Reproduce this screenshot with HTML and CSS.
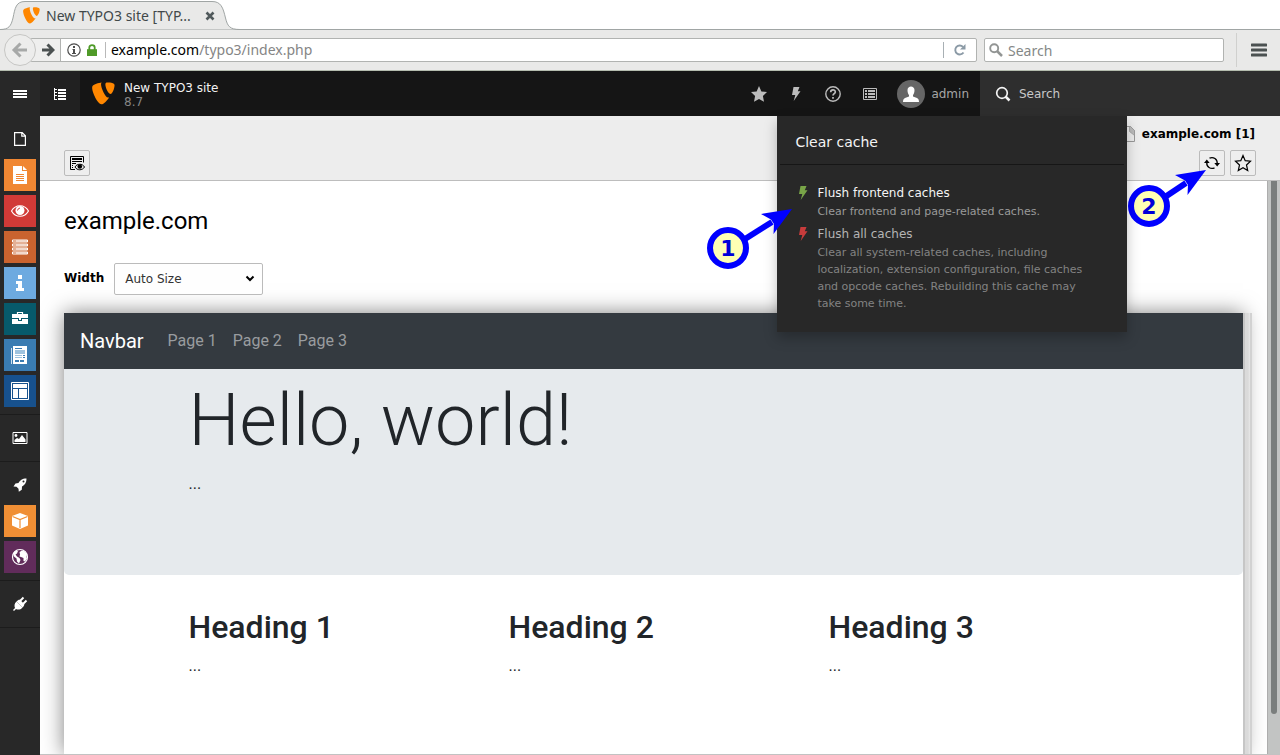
FILE: index.html
```html
<!DOCTYPE html>
<html lang="en">
<head>
<meta charset="utf-8">
<title>New TYPO3 site [TYPO3 CMS 8.7]</title>
<link rel="stylesheet" href="styles.css">
</head>
<body>
<svg class="sprite" aria-hidden="true">
  <symbol id="typo3" viewBox="0 0 16 16"><path fill="#ff8700" d="M11.900 10.700c-.2.1-.4.1-.7.1-2 0-4.900-6.800-4.900-9.100 0-.8.2-1.100.5-1.400C4.300.6 1.400 1.500.500 2.600.3 2.900.1 3.300.1 3.900.1 7.400 3.900 15.500 6.600 15.500c1.200 0 3.400-2 5.300-4.800M10.700.3c2.500 0 5 .4 5 1.800 0 2.800-1.800 6.300-2.700 6.300-1.600 0-3.700-4.500-3.700-6.700C9.300.7 9.700.3 10.700.3"/></symbol>
  <symbol id="bolt" viewBox="0 0 16 16"><path fill="currentColor" d="M5.500 1h6L9.800 5.200h2.700L5.700 15l1.600-6H4z"/></symbol>
</svg>

<div class="browser-tabs">
  <svg class="tab-shape" viewBox="0 0 240 30" aria-hidden="true"><path d="M0 29.500C9 29.500 11 26 13 18 15 8 16 1.500 25 1.500H212c9 0 11 6 13.500 16.500 2 8 4 11.500 14.500 11.500" fill="#e9e9e8" stroke="#a0a5a4"/></svg>
  <div class="tab">
    <svg class="tab-logo"><use href="#typo3"/></svg>
    <span class="tab-title">New TYPO3 site [TYP...</span>
    <button class="tab-close" aria-label="Close tab"><svg width="10" height="10" viewBox="0 0 10 10"><path d="M1.500 1.500l7 7M8.500 1.500l-7 7" stroke="#50595b" stroke-width="2.600"/></svg></button>
  </div>
</div>

<div class="browser-bar">
  <button class="back" aria-label="Back"><svg width="18" height="18" viewBox="0 0 18 18" fill="none" stroke="#a7a9a8" stroke-width="3"><path d="M9.500 2.500L3 9l6.500 6.500M3.500 9H16"/></svg></button>
  <div class="address">
    <button class="forward" aria-label="Forward"><svg width="14" height="14" viewBox="0 0 14 14" fill="none" stroke="#4b5151" stroke-width="3"><path d="M6.500 1.500L12 7l-5.500 5.500M11.500 7H1"/></svg></button>
    <svg class="info" width="14" height="14" viewBox="0 0 14 14"><circle cx="7" cy="7" r="6.200" fill="none" stroke="#4d4d4d" stroke-width="1.200"/><path d="M6 3h2v2H6zM5.500 6H8v4h1v1H5v-1h1V7h-.5z" fill="#4d4d4d"/></svg>
    <svg class="lock" width="10" height="12" viewBox="0 0 10 12"><path d="M2.300 6V3.500C2.300.3 7.700.3 7.700 3.500V6" fill="none" stroke="#4f9a28" stroke-width="1.800"/><path d="M0 5.200h10V12H0z" fill="#4f9a28"/></svg>
    <div class="url" role="textbox" aria-label="Address" contenteditable="true" spellcheck="false">example.com<span class="url-path">/typo3/index.php</span></div>
    <button class="reload" aria-label="Reload"><svg width="14" height="14" viewBox="0 0 14 14"><path d="M10.500 9.500A4.500 4.500 0 1 1 10 3.800" fill="none" stroke="#8b9aa6" stroke-width="1.900"/><path d="M12.500 1v5.500H7z" fill="#8b9aa6"/></svg></button>
  </div>
  <label class="browser-search">
    <svg width="14" height="14" viewBox="0 0 14 14" fill="none" stroke="#929594"><circle cx="5.200" cy="5.200" r="4" stroke-width="1.900"/><path d="M8 8l5 5" stroke-width="2.500"/></svg>
    <input type="search" placeholder="Search" aria-label="Search the web">
  </label>
  <button class="browser-menu" aria-label="Open menu"><svg width="16" height="14" viewBox="0 0 16 14"><path d="M1 2h14M1 7h14M1 12h14" stroke="#4b5151" stroke-width="3" stroke-linecap="round"/></svg></button>
</div>

<div class="backend">
  <nav class="modules" aria-label="Modules">
    <button class="modules-toggle" aria-label="Toggle module menu"><svg width="14" height="10" viewBox="0 0 14 10" fill="#fff"><path d="M0 1h14v2H0zM0 4h14v2H0zM0 7h14v2H0z"/></svg></button>
    <div class="module-group">
      <a class="module" href="#page" aria-label="Web"><svg viewBox="0 0 16 16"><path d="M2.600 1.600h7.600l3.200 3.200v9.600H2.600zM9.800 1.600v3.600h3.600" fill="none" stroke="#fff" stroke-width="1.200"/></svg></a>
      <a class="module orange" href="#page" aria-label="Page"><svg viewBox="0 0 18 18"><path d="M2 0h9v5h5v13H2zM12 0l4 4h-4z" fill="#fff"/><path d="M5 8.500h8M5 10.500h8M5 12.500h8M5 14.500h8" stroke="#f08733"/></svg></a>
      <a class="module red" href="#view" aria-label="View"><svg viewBox="0 0 18 18"><path d="M.5 9C4.500 2 13.500 2 17.500 9 13.500 16 4.500 16 .5 9z" fill="none" stroke="#fff" stroke-width="1.200"/><circle cx="9" cy="8.500" r="4.500" fill="#fff"/><path d="M6.500 8.500A3 3 0 0 1 9 6" stroke="#d13a37" fill="none"/></svg></a>
      <a class="module rust" href="#list" aria-label="List"><svg viewBox="0 0 18 18"><path d="M1.500 2h15v2h-15zM1.500 6h15v2h-15zM1.500 10h15v2h-15zM1.500 14h15v2h-15z" fill="#c9632f" stroke="#fff"/><path d="M5 3h11M5 7h11M5 11h11M5 15h11" stroke="#fff"/></svg></a>
      <a class="module sky" href="#info" aria-label="Info"><svg viewBox="0 0 18 18" fill="#fff"><path d="M7 1h4v4H7zM5 7h6v7h2v3H5v-3h2v-4H5z"/></svg></a>
      <a class="module teal" href="#functions" aria-label="Functions"><svg viewBox="0 0 18 18"><path d="M6.500 4.500v-2h5v2" fill="none" stroke="#fff" stroke-width="1.200"/><path d="M1 4h16v4h-7v2H8V8H1zM1 9h6v2h4V9h6v5H1z" fill="#fff"/></svg></a>
      <a class="module blue" href="#forms" aria-label="Forms"><svg viewBox="0 0 18 18"><path d="M2 0h14v18H2z" fill="#fff"/><path d="M0 2h1v16H0z" fill="#cfe0ee"/><path d="M4 4h10v4H4zM4 9h7v1H4zM4 11h7v1H4z" fill="#9fc3de"/><path d="M4 2h7v1H4zM12 9h2v1h-2zM12 11h2v1h-2zM4 14h4v2H4zM9 14h4v2H9z" fill="#3a7cb2"/></svg></a>
      <a class="module navy" href="#template" aria-label="Template"><svg viewBox="0 0 18 18"><path d="M.5.500h17v17H.5z" fill="none" stroke="#fff"/><path d="M2 2h14v4H2zM2 7h5v9H2zM8 7h8v9H8z" fill="#fff"/></svg></a>
    </div>
    <div class="module-group">
      <a class="module" href="#file" aria-label="File"><svg viewBox="0 0 16 16"><path d="M1 2.500h14v11H1z" fill="none" stroke="#fff"/><circle cx="4" cy="5.500" r="1.400" fill="#fff"/><path d="M2.500 12V10l2.500-2 2 1 3-4 3.500 4.500V12z" fill="#fff"/></svg></a>
    </div>
    <div class="module-group">
      <a class="module" href="#admin" aria-label="Admin tools"><svg viewBox="0 0 16 16" fill="#fff"><path d="M14.500 1.500C10 1.500 8 3.500 6.500 6L3.500 6.500 1.500 9.500l3 .3 2 2 .3 3 3-2L10 9.500c2.500-1.500 4.500-3.500 4.500-8zM11.500 3.500a1 1 0 1 1 0 2 1 1 0 0 1 0-2z"/></svg></a>
      <a class="module amber" href="#extensions" aria-label="Extensions"><svg viewBox="0 0 18 18"><path d="M9 1l8 3v9.500L9 17l-8-3.500V4z" fill="#fff"/><path d="M1.500 4.500L9 7.500l7.500-3M9 7.500V16" fill="none" stroke="#f08f35" stroke-width="1.200"/></svg></a>
      <a class="module purple" href="#language" aria-label="Languages"><svg viewBox="0 0 18 18"><circle cx="9" cy="9" r="7.500" fill="none" stroke="#fff" stroke-width="1.200"/><path d="M2 5l3-2.500 2 .5-1 2.500-1.500 1 1.500 2 2.500 1.500 1 2-1.500 3.500-2-2-.5-3-2.500-2zM8.500 4L11 2.500l3 1 2 3-.5 2.500.5 1.500-2 3-1.500-.5v-3L10 9 8.500 8.500 9 6.500z" fill="#fff"/></svg></a>
    </div>
    <div class="module-group">
      <a class="module" href="#system" aria-label="System"><svg viewBox="0 0 16 16"><path d="M4.500 5.500l6 6c-2 2.500-5 2.500-6.500 1.500l-2 2-1-1 2-2c-.8-2-.8-4.500 1.500-6.500z" fill="#fff"/><path d="M4.500 5.500C6 3.800 7 3.500 8 3.800l4.200 4.200c.3 1-.2 2-1.700 3.500z" fill="#fff"/><path d="M8 5l3.500-3.500M11 8l3.500-3.500" stroke="#fff" stroke-width="1.900"/></svg></a>
    </div>
  </nav>

  <div class="workspace">
    <header class="topbar">
      <button class="tree-toggle" aria-label="Toggle page tree"><svg width="12" height="12" viewBox="0 0 12 12" fill="#fff"><path d="M0 0h1v12H0zM1 1h2v1H1zM1 4h2v1H1zM1 7h2v1H1zM1 11h2v1H1zM4 1h8v2H4zM4 4h8v2H4zM4 7h8v2H4zM4 10h8v2H4z"/></svg></button>
      <a class="brand" href="#home">
        <svg class="brand-logo"><use href="#typo3"/></svg>
        <span class="brand-text">New TYPO3 site<span class="version">8.7</span></span>
      </a>
      <div class="tools">
        <button class="tool" aria-label="Bookmarks"><svg width="18" height="18" viewBox="0 0 18 18"><path d="M9 1l2.400 5.400 5.600.6-4.100 4 1.100 5.800L9 14l-5 2.800L5.100 11 1 7l5.600-.6z" fill="#bcbcbc"/></svg></button>
        <div class="cache">
          <button class="tool" aria-label="Clear cache" aria-expanded="true"><svg class="tool-bolt"><use href="#bolt"/></svg></button>
          <section class="cache-menu">
            <h2 class="cache-title">Clear cache</h2>
            <a class="cache-item active" href="#frontend"><svg class="flush green"><use href="#bolt"/></svg><span><span class="cache-name">Flush frontend caches</span><span class="cache-text">Clear frontend and page-related caches.</span></span></a>
            <a class="cache-item" href="#all"><svg class="flush crimson"><use href="#bolt"/></svg><span><span class="cache-name">Flush all caches</span><span class="cache-text">Clear all system-related caches, including localization, extension configuration, file caches and opcode caches. Rebuilding this cache may take some time.</span></span></a>
            <svg class="callout callout-one" width="86" height="64" viewBox="0 0 86 64"><path d="M38 32L65 15" stroke="#00f" stroke-width="6"/><path d="M85 2L54 7l10 5.500 3 4.500-.5 10z" fill="#00f"/><circle cx="21" cy="41" r="18" fill="#ffffb4" stroke="#00f" stroke-width="6"/><text class="callout-number" x="21" y="49">1</text></svg>
          </section>
        </div>
        <button class="tool" aria-label="Help"><svg width="16" height="16" viewBox="0 0 16 16" fill="none" stroke="#bcbcbc"><circle cx="8" cy="8" r="7.200" stroke-width="1.400"/><path d="M5.700 6.200c0-3 4.600-3 4.600-.3C10.300 7.600 8 7.700 8 9.500M8 11v1.800" stroke-width="1.700"/></svg></button>
        <button class="tool" aria-label="System information"><svg width="14" height="12" viewBox="0 0 14 12"><path d="M.5.500h13v11H.5z" fill="none" stroke="#bcbcbc"/><path d="M2 3h2M2 6h2M2 9h2M5 3h7M5 6h7M5 9h7" stroke="#bcbcbc" stroke-width="1.800"/></svg></button>
        <button class="user"><span class="avatar"><svg width="16" height="18" viewBox="0 0 16 18" fill="#fff"><path d="M4.500 5C4.500.300 11.500.300 11.500 5c0 2.500-.7 4-1.500 5v1.500l4 1.500c1.500.7 2 2 2 4H0c0-2 .5-3.300 2-4l4-1.500V10C5.200 9 4.500 7.500 4.500 5z"/></svg></span>admin</button>
      </div>
      <label class="backend-search"><svg width="16" height="16" viewBox="0 0 16 16" fill="none" stroke="#f4f4f4"><circle cx="7" cy="7" r="5.300" stroke-width="1.700"/><path d="M10.500 10.500l4 4" stroke-width="2.500"/></svg><input type="search" placeholder="Search" aria-label="Search records"></label>
    </header>

    <div class="docheader">
      <div class="page-path"><svg width="13" height="16" viewBox="0 0 13 16"><path d="M.5.500h8l4 4v11H.5z" fill="#ededed" stroke="#999"/><path d="M7.500 0v5.500l5 4v-5L8.500.500z" fill="#bbb" stroke="#999" stroke-width=".7"/></svg><b>example.com [1]</b></div>
      <div class="doc-actions">
        <button class="doc-button" aria-label="View webpage"><svg width="16" height="16" viewBox="0 0 16 16"><path d="M6 14.500H1.500V1.500h13v6" fill="none" stroke="#000"/><path d="M3 4h10" stroke="#000" stroke-width="2"/><path d="M3 6.500h10M3 8.500h4M3 10.500h1M3 12.500h1" stroke="#000"/><path d="M6 12c2-3.700 7.500-3.700 9.500 0-2 3.700-7.500 3.700-9.500 0z" fill="#ededed" stroke="#000"/><circle cx="10.800" cy="11.500" r="2.300"/></svg></button>
        <div class="doc-actions-right">
          <div class="refresh">
            <button class="doc-button" aria-label="Reload"><svg width="16" height="16" viewBox="0 0 16 16"><path d="M5.500 3.200A5.300 5.300 0 0 1 13.200 8.500M10.500 12.800A5.300 5.300 0 0 1 2.800 7.500" fill="none" stroke="#000" stroke-width="1.300"/><path d="M10.300 8H16l-2.800 3.500zM0 8l2.800-3.500L5.700 8z"/></svg></button>
            <svg class="callout callout-two" width="80" height="60" viewBox="0 0 80 60"><path d="M37 29L58 15" stroke="#00f" stroke-width="6"/><path d="M78 2L47 7l10 5.500 3 4.500-.5 10z" fill="#00f"/><circle cx="21" cy="38" r="18" fill="#ffffb4" stroke="#00f" stroke-width="6"/><text class="callout-number" x="21" y="46">2</text></svg>
          </div>
          <button class="doc-button" aria-label="Bookmark this page"><svg width="18" height="18" viewBox="0 0 18 18"><path d="M9 1.500l2.200 5.200 5.300.5-4 3.800 1.200 5.500L9 13.700l-4.700 2.800L5.500 11l-4-3.800 5.300-.5z" fill="none" stroke="#000" stroke-width="1.200"/></svg></button>
        </div>
      </div>
    </div>

    <div class="scroll-area">
      <main class="content">
        <h1 class="page-title">example.com</h1>
        <div class="width-row">
          <label for="width">Width</label>
          <div class="select-wrap"><select id="width"><option>Auto Size</option></select><svg width="10" height="8" viewBox="0 0 10 8"><path d="M1.500 1.500L5 5l3.500-3.500" fill="none" stroke="#000" stroke-width="2"/></svg></div>
        </div>
        <div class="preview-row">
          <article class="preview">
            <nav class="navbar"><a class="navbar-brand" href="#site">Navbar</a><a href="#1">Page 1</a><a href="#2">Page 2</a><a href="#3">Page 3</a></nav>
            <div class="jumbotron"><div class="container"><h1>Hello, world!</h1><p>...</p></div></div>
            <div class="container columns">
              <section><h2>Heading 1</h2><p>...</p></section>
              <section><h2>Heading 2</h2><p>...</p></section>
              <section><h2>Heading 3</h2><p>...</p></section>
            </div>
          </article>
          <div class="resize-handle"></div>
        </div>
      </main>
      <div class="scrollbar"><div class="thumb"></div></div>
    </div>
  </div>
</div>
</body>
</html>
```

FILE: styles.css
```css
* { box-sizing: border-box; }

body {
  margin: 0;
  height: 100vh;
  display: flex;
  flex-direction: column;
  overflow: hidden;
  background: #fff;
  font-family: "DejaVu Sans", sans-serif;
  font-size: 12px;
}

button {
  padding: 0;
  border: 0;
  background: none;
  color: inherit;
  font: inherit;
  display: flex;
  align-items: center;
  justify-content: center;
}

a { color: inherit; text-decoration: none; }
h1, h2, p { margin: 0; }
svg { display: block; flex: none; }

input {
  border: 0;
  padding: 0;
  min-width: 0;
  flex: 1;
  outline: 0;
  background: none;
  font: inherit;
}

.sprite { position: absolute; width: 0; height: 0; }

/* Browser window */
.browser-tabs {
  position: relative;
  flex: none;
  height: 30px;
  border-bottom: 1px solid #a0a5a4;
}
.tab-shape { position: absolute; left: 0; top: 0; width: 240px; height: 30px; }
.tab {
  position: relative;
  display: flex;
  align-items: center;
  width: 240px;
  height: 30px;
  padding: 1px 24px 0 23px;
  font-family: "Noto Sans", sans-serif;
  font-size: 14px;
  color: #41484a;
}
.tab-logo { width: 17px; height: 17px; margin-right: 6px; }
.tab-title { flex: 1; white-space: nowrap; }
.tab-close { width: 12px; }

.browser-bar {
  flex: none;
  display: flex;
  align-items: center;
  height: 41px;
  padding-left: 4px;
  border-bottom: 1px solid #b4bcae;
  background: #e9e9e8;
  font-family: "Noto Sans", sans-serif;
  font-size: 14px;
}
.back {
  position: relative;
  z-index: 1;
  width: 32px;
  height: 32px;
  border: 1px solid #c6c6c4;
  border-radius: 50%;
  background: #ededec;
}
.address {
  flex: 1;
  display: flex;
  align-items: center;
  height: 24px;
  margin-left: -6px;
  border: 1px solid #b1b3b1;
  border-radius: 2px;
  background: #fff;
}
.forward {
  width: 30px;
  height: 22px;
  padding-left: 4px;
  border-right: 1px solid #b1b3b1;
  background: #efefee;
}
.info { margin-left: 6px; }
.lock { margin: 0 8px 0 6px; }
.url {
  flex: 1;
  padding-left: 5px;
  border-left: 1px solid #b9b9b9;
  line-height: 16px;
  white-space: nowrap;
  color: #000;
}
.url-path { color: #858585; }
.reload { width: 33px; height: 16px; border-left: 1px solid #a8b0b4; }
.browser-search {
  display: flex;
  align-items: center;
  gap: 5px;
  width: 240px;
  height: 24px;
  margin: 0 12px 0 7px;
  padding: 0 4px;
  border: 1px solid #b1b3b1;
  border-radius: 2px;
  background: #fff;
}
.browser-search input::placeholder { color: #858887; }
.browser-menu { width: 44px; height: 34px; border-left: 1px solid #d0d0ce; }

/* Module menu */
.backend { flex: 1; display: flex; min-height: 0; }
.modules { flex: none; width: 40px; background: #282828; }
.modules-toggle { width: 40px; height: 45px; }
.module-group {
  display: flex;
  flex-direction: column;
  gap: 4px;
  padding: 7px 4px;
  border-bottom: 1px solid #1c1c1c;
}
.module { display: flex; align-items: center; justify-content: center; width: 32px; height: 32px; }
.module svg { width: 16px; height: 16px; }
.module[class*=" "] svg { width: 18px; height: 18px; }
.orange { background: #f08733; }
.red { background: #d13a37; }
.rust { background: #c9632f; }
.sky { background: #6daae0; }
.teal { background: #075a6b; }
.blue { background: #3a7cb2; }
.navy { background: #17518d; }
.amber { background: #f08f35; }
.purple { background: #612c5b; }

/* Top bar */
.workspace { flex: 1; min-width: 0; display: flex; flex-direction: column; }
.topbar {
  position: relative;
  z-index: 3;
  flex: none;
  display: flex;
  height: 45px;
  background: #151515;
  color: #bababa;
}
.tree-toggle { width: 40px; background: #212121; }
.brand { display: flex; align-items: center; gap: 9px; padding-left: 12px; color: #f2f2f2; }
.brand-logo { width: 23px; height: 23px; }
.brand-text { line-height: 14px; padding-top: 2px; }
.version { display: block; color: #868686; }
.tools { display: flex; margin-left: auto; }
.tool { width: 37px; height: 45px; }
.tool-bolt { width: 16px; height: 16px; color: #bcbcbc; }
.user { gap: 6px; padding: 0 11px 0 9px; color: #a6a6a6; }
.avatar {
  display: flex;
  align-items: center;
  justify-content: center;
  width: 28px;
  height: 28px;
  border-radius: 50%;
  background: #666;
}
.backend-search {
  display: flex;
  align-items: center;
  gap: 8px;
  width: 300px;
  padding-left: 15px;
  background: #2e2e2e;
}
.backend-search input::placeholder { color: #c8c8c8; }

/* Cache menu */
.cache { position: relative; }
.cache-menu {
  position: absolute;
  top: 45px;
  left: 0;
  width: 350px;
  padding: 0 3px 16px;
  background: #282828;
  box-shadow: 0 6px 12px rgba(0, 0, 0, .25);
}
.cache-title {
  margin-bottom: 19px;
  padding: 16px 15px 12px;
  border-bottom: 1px solid #161616;
  font-size: 14px;
  font-weight: 400;
  line-height: 20px;
  color: #f4f4f4;
}
.cache-item { display: flex; gap: 6px; padding: 0 30px 4px 15px; color: #b4b4b4; }
.cache-item.active { color: #f4f4f4; }
.flush { width: 16px; height: 16px; margin-top: 1px; }
.green { color: #79a548; }
.crimson { color: #c83c3c; }
.cache-name { display: block; line-height: 18px; }
.cache-text { display: block; padding-top: 1px; font-size: 11px; line-height: 17px; color: #838383; }
.active .cache-text { padding-bottom: 1px; color: #9a9a9a; }

.callout { position: absolute; pointer-events: none; }
.callout-one { left: -70px; top: 91px; }
.callout-two { left: -71px; top: 18px; }
.callout-number { font-size: 22px; font-weight: 700; fill: #0000d8; text-anchor: middle; }

/* Document header */
.docheader {
  position: relative;
  z-index: 2;
  flex: none;
  height: 65px;
  padding: 9px 24px 0;
  border-bottom: 1px solid #bdbdbd;
  background: #ededed;
  color: #000;
}
.page-path { display: flex; align-items: center; justify-content: flex-end; gap: 7px; height: 17px; padding-right: 1px; }
.doc-actions { display: flex; justify-content: space-between; margin-top: 8px; }
.doc-actions-right { display: flex; gap: 5px; }
.doc-button { width: 26px; height: 26px; border: 1px solid #bbb; border-radius: 2px; background: #eee; }
.refresh { position: relative; }

/* Page content */
.scroll-area { flex: 1; min-height: 0; display: flex; border-bottom: 1px solid #c2c2c2; }
.content { flex: 1; min-width: 0; display: flex; flex-direction: column; padding: 24px 15px 0 24px; overflow: hidden; }
.page-title { font: 400 24px/32px Roboto, sans-serif; color: #000; }
.width-row { display: flex; align-items: center; gap: 10px; margin: 26px 0 18px; }
.width-row label { font-weight: 700; padding-bottom: 2px; }
.select-wrap { position: relative; width: 149px; }
.select-wrap svg { position: absolute; right: 8px; top: 12px; pointer-events: none; }
select {
  appearance: none;
  width: 100%;
  height: 32px;
  padding: 0 10px;
  border: 1px solid #bbb;
  border-radius: 2px;
  background: #fefefe;
  font: inherit;
  color: #333;
}
.preview-row { flex: 1; display: flex; }
.preview {
  flex: 1;
  background: #fff;
  box-shadow: 0 0 20px rgba(0, 0, 0, .5);
  font-family: Roboto, sans-serif;
  font-size: 16px;
  line-height: 24px;
  color: #212529;
}
.resize-handle {
  position: relative;
  width: 9px;
  background: linear-gradient(90deg, #c6c6c6 2px, #dadada 2px, #dadada 5px, #e8e8e8 7px, #d2d2d2 7px);
}
.navbar {
  display: flex;
  align-items: center;
  gap: 16px;
  height: 56px;
  padding: 0 16px;
  background: #343a40;
  color: #999c9f;
}
.navbar-brand { margin-right: 8px; font-size: 20px; color: #fff; }
.jumbotron { height: 206px; padding-top: 12px; border-radius: 0 0 5px 5px; background: #e6eaed; }
.container { max-width: 960px; margin: 0 auto; padding: 0 15px; }
.jumbotron h1 { margin-bottom: 12px; font-size: 72px; font-weight: 300; line-height: 79px; }
.columns { display: grid; grid-template-columns: repeat(3, 1fr); gap: 30px; padding-top: 33px; }
.columns h2 { margin-bottom: 8px; font-size: 32px; font-weight: 500; line-height: 38px; }

.scrollbar { width: 13px; padding: 0 3px; border-left: 1px solid #adadad; background: #c2c4c3; }
.thumb { width: 6px; height: 93%; border-radius: 0 0 3px 3px; background: #7a7e7d; }
```
